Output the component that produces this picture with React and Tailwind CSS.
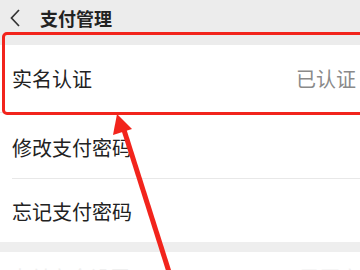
import React from 'react';

const font = { fontFamily: '"Noto Sans CJK SC", "Noto Sans", sans-serif' };

const App = () => {
  return (
    <div className="relative w-[360px] h-[270px] overflow-hidden bg-white" style={font}>
      {/* 顶部标题栏 */}
      <div className="h-[45px] bg-[#ececec] flex items-start pt-[6px]">
        <svg width="14" height="22" viewBox="0 0 14 22" className="ml-[8px] mt-[1px]">
          <path d="M11 3 L3.5 11 L11 19" fill="none" stroke="#333" strokeWidth="1.7" />
        </svg>
        <span className="ml-[18px] text-[18px] leading-[24px] font-bold text-[#222]">支付管理</span>
      </div>

      {/* 列表 */}
      <div className="flex items-center justify-between h-[68px] pl-[12px] pr-[4px] border-b border-[#e8e8e8]">
        <span className="text-[20px] text-[#222]">实名认证</span>
        <span className="text-[20px] text-[#8a8a8a]">已认证</span>
      </div>
      <div className="ml-[12px] flex items-center h-[66px] pt-[4px] border-b border-[#e8e8e8]">
        <span className="text-[20px] text-[#222]">修改支付密码</span>
      </div>
      <div className="flex items-center h-[63px] pl-[12px] pt-[2px]">
        <span className="text-[20px] text-[#222]">忘记支付密码</span>
      </div>
      <div className="h-[10px] bg-[#eeeeee]" />
      <div className="flex items-start justify-between pl-[10px] pr-0 pt-[14px]">
        <span className="text-[20px] leading-[24px] text-[#f0f0f0]">支付安全设置</span>
        <span className="text-[20px] leading-[24px] text-[#f0f0f0]">已开启</span>
      </div>

      {/* 红框标注 */}
      <div className="absolute left-[2px] top-[32px] w-[370px] h-[83px] border-[3px] border-[#f2241c] rounded-[5px]" />

      {/* 红色箭头 */}
      <svg className="absolute left-0 top-0" width="360" height="270" viewBox="0 0 360 270">
        <line x1="124" y1="130" x2="170" y2="275" stroke="#f2241c" strokeWidth="5" />
        <polygon points="117,114 113,135 132,129" fill="#f2241c" />
      </svg>
    </div>
  );
};

export default App;
